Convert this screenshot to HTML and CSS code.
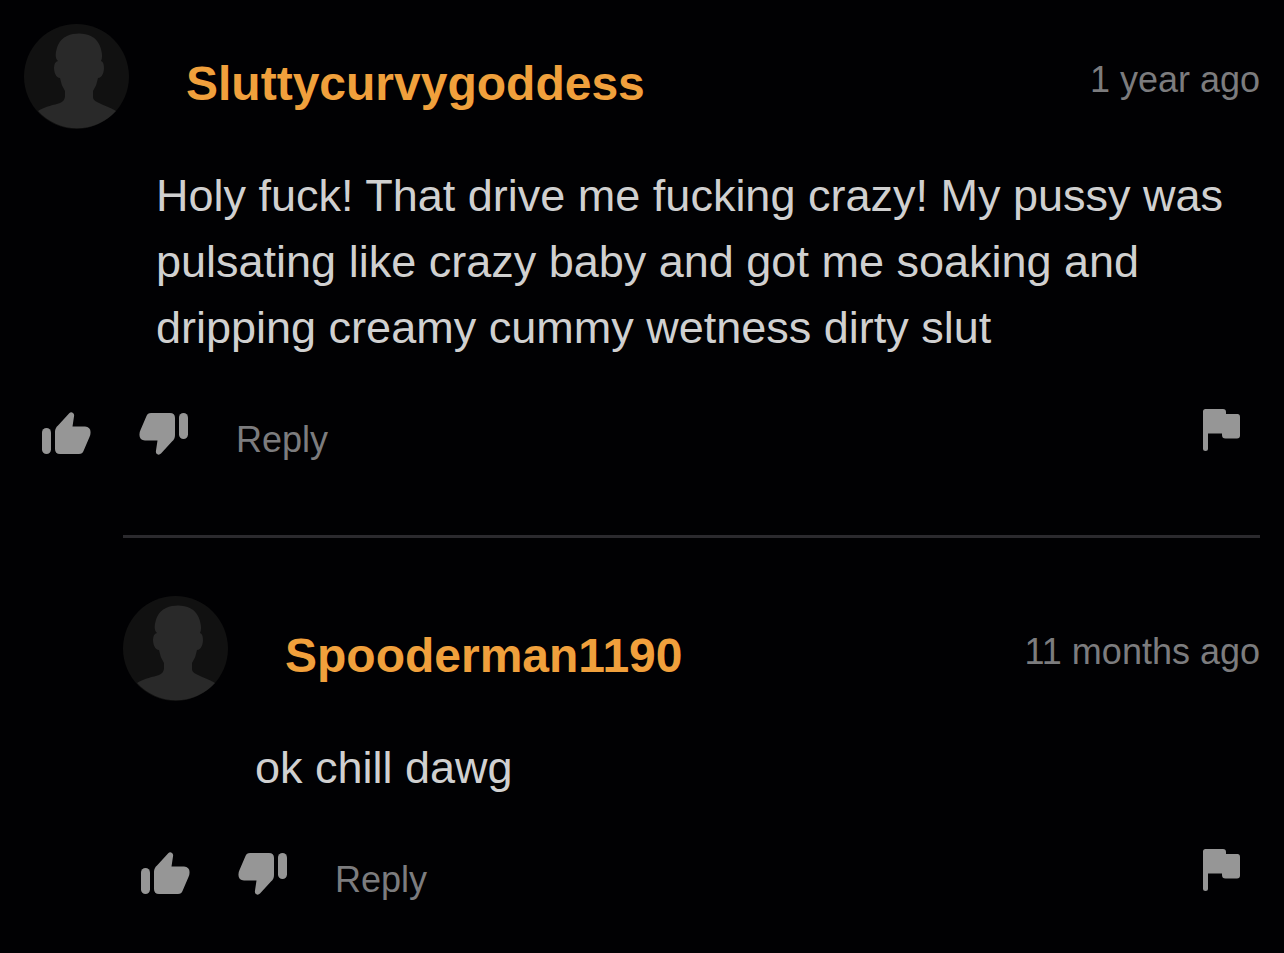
FILE: index.html
```html
<!DOCTYPE html>
<html lang="en">
<head>
<meta charset="utf-8">
<meta name="viewport" content="width=device-width, initial-scale=1">
<title>Comments</title>
<link rel="stylesheet" href="styles.css">
</head>
<body>
<svg class="sprite" aria-hidden="true">
  <symbol id="avatar" viewBox="0 0 105 105">
    <circle cx="52.500" cy="52.500" r="52.500" fill="#111111"/>
    <path fill="#292929" d="M14 87 C22 82 30 81 36 79 Q41 77 41 72 V67 Q37 61 36 54 C32 54 30 48 30 44 Q30 38 34 37 C30 34 32 26 34 21 C38 12 47 9.500 55 9.500 C64 9.500 72 13 75.500 21 C78 27 79 33 77 37 Q80 38 80 44 C80 48 78 54 74 54 Q73 61 69 67 V73 Q69 76 73 78 C80 82 86 83 92 87 A52.500 52.500 0 0 1 14 87 Z"/>
  </symbol>
  <symbol id="thumb" viewBox="0 0 49 43">
    <rect x="0" y="16" width="9" height="26" rx="4.500"/>
    <path d="M13 20 Q13 16 16 13.500 L27 1.500 Q29 -.5 31 1 Q32.500 2 32 4.500 L30.500 14.500 H43 Q49 15 48.500 21 Q48.500 23 47.500 25 L41.500 39 Q40.500 42 37 42 H18 Q13 42 13 37 Z"/>
  </symbol>
  <symbol id="flag" viewBox="0 0 38 43">
    <path d="M0 2.500 Q0 0 2.500 0 H20 Q23 0 23 3 V5 H34.500 Q37 5 37 8 V26.500 Q37 29.500 34 29.500 H22.500 Q19 29.500 19 26 V24.500 H5 V39.500 Q5 42 2.500 42 Q0 42 0 39.500 Z"/>
  </symbol>
</svg>

<main class="comments">
  <article class="comment">
    <header class="head">
      <svg class="avatar" aria-hidden="true"><use href="#avatar"/></svg>
      <a class="name" href="#">Sluttycurvygoddess</a>
      <time class="time">1 year ago</time>
    </header>
    <p class="text">Holy fuck! That drive me fucking crazy! My pussy was pulsating like crazy baby and got me soaking and dripping creamy cummy wetness dirty slut</p>
    <div class="actions">
      <button class="vote" type="button" aria-label="Like"><svg class="thumb"><use href="#thumb"/></svg></button>
      <button class="vote" type="button" aria-label="Dislike"><svg class="thumb down"><use href="#thumb"/></svg></button>
      <button class="reply" type="button">Reply</button>
      <button class="report" type="button" aria-label="Report"><svg class="flag"><use href="#flag"/></svg></button>
    </div>
  </article>

  <section class="replies">
    <article class="comment">
      <header class="head">
        <svg class="avatar" aria-hidden="true"><use href="#avatar"/></svg>
        <a class="name" href="#">Spooderman1190</a>
        <time class="time">11 months ago</time>
      </header>
      <p class="text">ok chill dawg</p>
      <div class="actions">
        <button class="vote" type="button" aria-label="Like"><svg class="thumb"><use href="#thumb"/></svg></button>
        <button class="vote" type="button" aria-label="Dislike"><svg class="thumb down"><use href="#thumb"/></svg></button>
        <button class="reply" type="button">Reply</button>
        <button class="report" type="button" aria-label="Report"><svg class="flag"><use href="#flag"/></svg></button>
      </div>
    </article>
  </section>
</main>
</body>
</html>
```
FILE: styles.css
```css
* {
  box-sizing: border-box;
}

body {
  margin: 0;
  background: #010103;
  color: #d0d0d0;
  font-family: "Liberation Sans", Arial, sans-serif;
}

.sprite {
  display: none;
}

.comments {
  padding: 24px;
}

.head {
  display: flex;
  align-items: flex-start;
}

.avatar {
  flex: none;
  width: 105px;
  height: 105px;
}

.name {
  margin-left: 57px;
  padding-top: 32px;
  color: #f0a03c;
  font-size: 48px;
  line-height: 56px;
  font-weight: 700;
  text-decoration: none;
}

.time {
  margin-left: auto;
  padding-top: 35px;
  color: #7c7c7e;
  font-size: 36px;
  line-height: 42px;
  white-space: nowrap;
}

.text {
  margin: 34px 0 0;
  padding-left: 132px;
  font-size: 45px;
  line-height: 66px;
}

.actions {
  display: flex;
  align-items: flex-start;
  margin-top: 48px;
  padding: 0 19px 0 18px;
}

.actions button {
  padding: 0;
  border: 0;
  background: none;
  color: #7c7c7e;
  font: inherit;
  cursor: pointer;
}

.actions svg {
  display: block;
  fill: #969696;
}

.actions .vote {
  margin: 3px 48px 0 0;
}

.thumb {
  width: 49px;
  height: 43px;
}

.down {
  transform: rotate(180deg);
}

.actions .reply {
  padding-top: 10px;
  font-size: 36px;
  line-height: 42px;
}

.actions .report {
  margin-left: auto;
}

.flag {
  width: 38px;
  height: 43px;
}

.replies {
  margin: 74px 0 0 99px;
  padding-top: 58px;
  border-top: 3px solid #2b2a2e;
}
```
